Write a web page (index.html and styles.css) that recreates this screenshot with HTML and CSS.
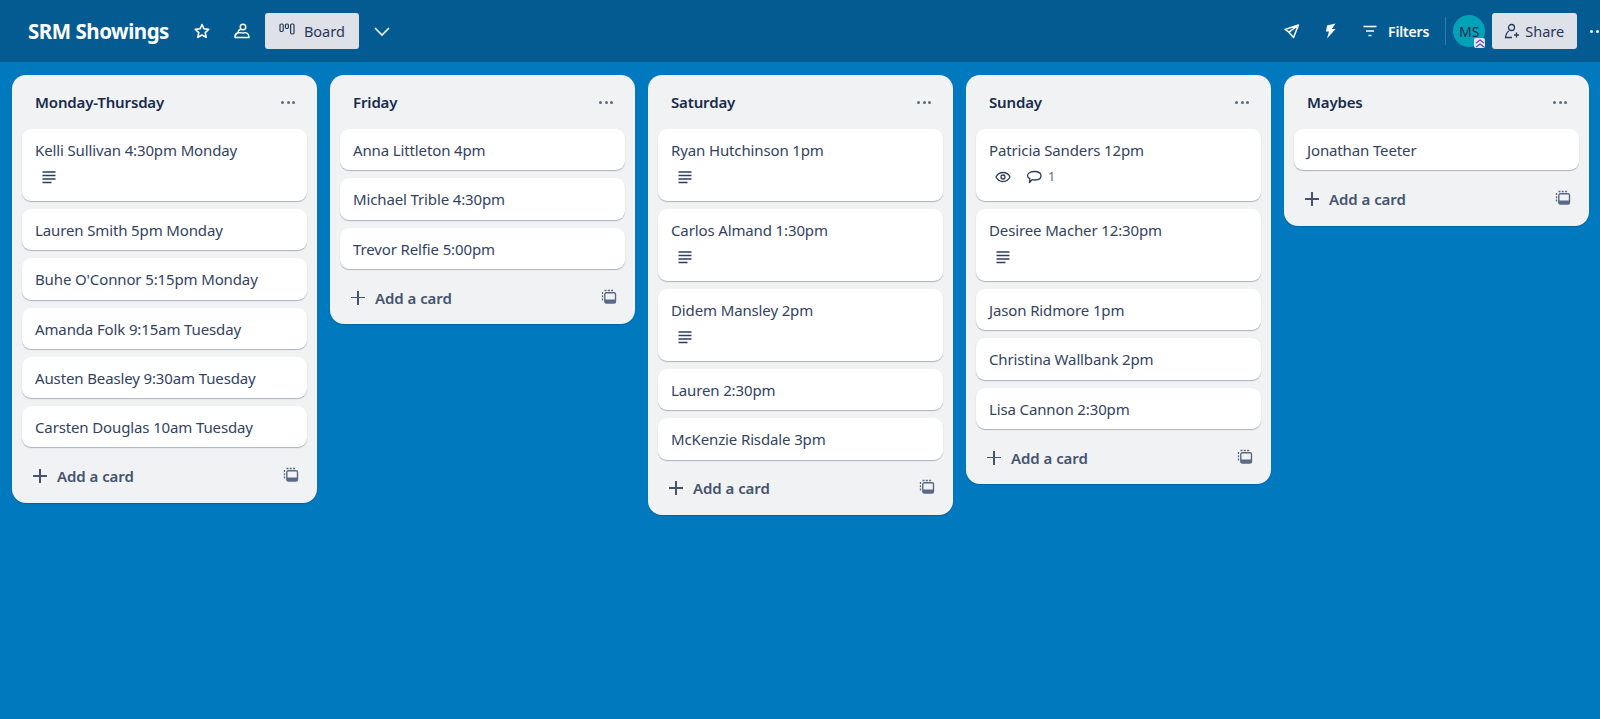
FILE: index.html
```html
<!DOCTYPE html>
<html lang="en">
<head>
<meta charset="utf-8">
<title>SRM Showings</title>
<link rel="stylesheet" href="styles.css">
</head>
<body>
<svg class="sprites" width="0" height="0" aria-hidden="true">
  <symbol id="desc" viewBox="0 0 16 16"><path d="M1.500 3h13M1.500 6.500h13M1.500 10h13M1.500 13.500h9" fill="none" stroke="currentColor" stroke-width="1.300"/></symbol>
  <symbol id="tpl" viewBox="0 0 16 16"><path d="M3.500 1.500h9.500M1.500 3v9" fill="none" stroke="currentColor" stroke-width="1.300" stroke-dasharray="2 1.300"/><rect x="3.800" y="3.800" width="10.700" height="10.200" rx="1.500" fill="none" stroke="currentColor" stroke-width="1.400"/><rect x="3.800" y="10.500" width="10.700" height="3.500" fill="currentColor"/></symbol>
</svg>
<header class="topbar">
  <div class="topbar-left">
    <h1 class="board-title">SRM Showings</h1>
    <button class="icon-btn star" aria-label="Star"><svg width="18" height="18" viewBox="0 0 18 18"><path d="M9 2.500l2 4.300 4.700.6-3.450 3.200.9 4.700L9 13l-4.150 2.300.9-4.700L2.300 7.400l4.700-.6z" fill="none" stroke="currentColor" stroke-width="1.600" stroke-linejoin="round"/></svg></button>
    <button class="icon-btn people" aria-label="Workspace"><svg width="18" height="18" viewBox="0 0 18 18"><g fill="none" stroke="currentColor" stroke-width="1.400" stroke-linejoin="round"><circle cx="10" cy="5" r="2.800"/><path d="M2 15.500c-.3-2.500 1-4.300 3-4.700.1-1.800 1-3 2.500-3.300M2 15.500c.3-2.300 1.500-4.300 3.500-4.700 1.600-.4 3.200-.2 4.500.4 1.400-.8 3-.6 4.300.2 1.200.8 1.700 2.500 1.700 4.100z"/></g></svg></button>
    <button class="view-btn"><svg class="board-ico" width="16" height="14" viewBox="0 0 16 14"><g fill="none" stroke="currentColor" stroke-width="1.200"><rect x="1" y="1" width="3.200" height="7.500" rx="1.200"/><rect x="6.400" y="1" width="3" height="4.500" rx="1.200"/><rect x="11.600" y="1" width="3.400" height="10" rx="1.200"/></g></svg>Board</button>
    <button class="icon-btn chev" aria-label="Views"><svg width="18" height="18" viewBox="0 0 18 18"><path d="M2 6l7 7 7-7" fill="none" stroke="currentColor" stroke-width="1.600"/></svg></button>
  </div>
  <div class="topbar-right">
    <span class="tool"><svg width="17" height="17" viewBox="0 0 17 17"><path d="M15.500 2L2 6.500l4 2.700 1 1.300 3.500 4zM6 9.200L15.500 2" fill="none" stroke="currentColor" stroke-width="1.500" stroke-linejoin="round"/></svg></span>
    <span class="tool bolt"><svg width="16" height="16" viewBox="0 0 16 16"><path d="M12.500 .5L4 2.500 3 8.500h3L4 15.500l8.500-9.500H8.800z" fill="currentColor"/></svg></span>
    <span class="tool filters"><svg width="16" height="14" viewBox="0 0 16 14"><path d="M1.500 2.500h13M4 7h8M6.500 11.500h3" fill="none" stroke="currentColor" stroke-width="1.400"/></svg>Filters</span>
    <span class="divider"></span>
    <span class="avatar">MS<span class="avatar-badge"><svg width="10" height="9" viewBox="0 0 10 9"><path d="M1 4l4-3 4 3M1 8l4-3 4 3" fill="none" stroke="#5e4db2" stroke-width="1.200"/></svg></span></span>
    <button class="view-btn share"><svg width="16" height="16" viewBox="0 0 16 16"><g fill="none" stroke="currentColor" stroke-width="1.300"><circle cx="7.500" cy="4.500" r="3"/><path d="M5 8c-2 1-3 3.500-3.500 6.500H8M12.500 9.500v5M10 12h5"/></g></svg>Share</button>
    <span class="more-dots"><i></i><i></i><i></i></span>
  </div>
</header>
<main class="board">
  <section class="list">
    <div class="list-head"><h2>Monday-Thursday</h2><span class="dots"><i></i><i></i><i></i></span></div>
    <article class="card tall">Kelli Sullivan 4:30pm Monday<div class="badges"><svg class="bi" width="16" height="16"><use href="#desc"/></svg></div></article>
    <article class="card">Lauren Smith 5pm Monday</article>
    <article class="card">Buhe O'Connor 5:15pm Monday</article>
    <article class="card">Amanda Folk 9:15am Tuesday</article>
    <article class="card">Austen Beasley 9:30am Tuesday</article>
    <article class="card">Carsten Douglas 10am Tuesday</article>
    <div class="add"><span class="plus"></span><span class="add-label">Add a card</span><svg class="tpl" width="16" height="16"><use href="#tpl"/></svg></div>
  </section>
  <section class="list">
    <div class="list-head"><h2>Friday</h2><span class="dots"><i></i><i></i><i></i></span></div>
    <article class="card">Anna Littleton 4pm</article>
    <article class="card">Michael Trible 4:30pm</article>
    <article class="card">Trevor Relfie 5:00pm</article>
    <div class="add"><span class="plus"></span><span class="add-label">Add a card</span><svg class="tpl" width="16" height="16"><use href="#tpl"/></svg></div>
  </section>
  <section class="list">
    <div class="list-head"><h2>Saturday</h2><span class="dots"><i></i><i></i><i></i></span></div>
    <article class="card tall">Ryan Hutchinson 1pm<div class="badges"><svg class="bi" width="16" height="16"><use href="#desc"/></svg></div></article>
    <article class="card tall">Carlos Almand 1:30pm<div class="badges"><svg class="bi" width="16" height="16"><use href="#desc"/></svg></div></article>
    <article class="card tall">Didem Mansley 2pm<div class="badges"><svg class="bi" width="16" height="16"><use href="#desc"/></svg></div></article>
    <article class="card">Lauren 2:30pm</article>
    <article class="card">McKenzie Risdale 3pm</article>
    <div class="add"><span class="plus"></span><span class="add-label">Add a card</span><svg class="tpl" width="16" height="16"><use href="#tpl"/></svg></div>
  </section>
  <section class="list">
    <div class="list-head"><h2>Sunday</h2><span class="dots"><i></i><i></i><i></i></span></div>
    <article class="card tall">Patricia Sanders 12pm<div class="badges">
      <svg class="bi" width="16" height="16" viewBox="0 0 16 16"><g fill="none" stroke="currentColor" stroke-width="1.300"><path d="M1 8c1.500-3 4-4.500 7-4.500s5.500 1.500 7 4.500c-1.500 3-4 4.500-7 4.500S2.500 11 1 8z"/><circle cx="8" cy="8" r="2"/></g></svg>
      <svg class="bi bubble" width="16" height="16" viewBox="0 0 16 16"><path d="M8.500 2.500C12 2.500 15 4 15 6.800s-2.500 4.200-6 4.200c-1 0-2 0-3-.3L3.500 13.500l.3-3.800C2.200 9 1.500 8 1.500 6.800c0-2.800 3.500-4.300 7-4.300z" fill="none" stroke="currentColor" stroke-width="1.300" stroke-linejoin="round"/></svg>
      <span class="count">1</span></div></article>
    <article class="card tall">Desiree Macher 12:30pm<div class="badges"><svg class="bi" width="16" height="16"><use href="#desc"/></svg></div></article>
    <article class="card">Jason Ridmore 1pm</article>
    <article class="card">Christina Wallbank 2pm</article>
    <article class="card">Lisa Cannon 2:30pm</article>
    <div class="add"><span class="plus"></span><span class="add-label">Add a card</span><svg class="tpl" width="16" height="16"><use href="#tpl"/></svg></div>
  </section>
  <section class="list">
    <div class="list-head"><h2>Maybes</h2><span class="dots"><i></i><i></i><i></i></span></div>
    <article class="card">Jonathan Teeter</article>
    <div class="add"><span class="plus"></span><span class="add-label">Add a card</span><svg class="tpl" width="16" height="16"><use href="#tpl"/></svg></div>
  </section>
</main>
</body>
</html>
```

FILE: styles.css
```css
* { box-sizing: border-box; }
html, body { height: 100%; }
body {
  margin: 0;
  overflow: hidden;
  background: #0079bf;
  color: #172b4d;
  font-family: "Noto Sans", "Open Sans", sans-serif;
  font-size: 14px;
}
.sprites { display: block; height: 0; }
button { font: inherit; border: 0; background: none; color: inherit; padding: 0; }
svg { display: block; flex: none; }

.topbar {
  height: 62px;
  background: #035b92;
  color: #fff;
  display: flex;
  align-items: center;
  justify-content: space-between;
  white-space: nowrap;
}
.topbar-left, .topbar-right { display: flex; align-items: center; }
.topbar-left { padding-left: 28px; }
.board-title { margin: 0 24px 0 0; font-size: 20.500px; font-weight: 700; letter-spacing: -0.48px; }
.icon-btn { display: flex; color: #fff; }
.people { margin-left: 22px; margin-right: 14px; }
.view-btn {
  height: 36px;
  padding: 0 14px;
  border-radius: 3px;
  background: #dfe1e8;
  color: #253858;
  display: flex;
  align-items: center;
  gap: 9px;
  font-size: 14.500px;
}
.board-ico { margin-top: -3px; }
.chev { margin-left: 14px; }
.topbar-right { width: 317px; flex: none; }
.tool { display: flex; align-items: center; color: #fff; font-weight: 600; letter-spacing: -0.15px; }
.bolt { margin-left: 23px; }
.filters { margin-left: 23px; gap: 10px; }
.divider { width: 1px; height: 28px; background: rgba(255,255,255,.2); margin-left: 16px; flex: none; }
.avatar {
  position: relative;
  flex: none;
  width: 32px;
  height: 32px;
  margin-left: 7px;
  border-radius: 50%;
  background: #00a2b8;
  color: #172b4d;
  font-size: 14px;
  display: flex;
  align-items: center;
  justify-content: center;
}
.avatar-badge {
  position: absolute;
  right: 0;
  bottom: -1px;
  width: 11px;
  height: 10px;
  background: #e4e2f5;
  border-radius: 2px;
  display: flex;
  align-items: center;
  justify-content: center;
}
.share { flex: none; margin-left: 7px; padding: 0 12px; gap: 5px; width: 85px; }
.more-dots { flex: none; margin-left: 13px; display: flex; gap: 3px; }
.more-dots i { width: 3px; height: 3px; border-radius: 50%; background: #fff; }

.board {
  display: flex;
  align-items: flex-start;
  gap: 13px;
  padding: 13px 12px 0;
  background: #0079bf;
}
.list {
  flex: none;
  width: 305px;
  padding: 0 10px;
  background: #f1f2f4;
  border-radius: 14px;
  box-shadow: 0 1px 1px rgba(9,30,66,.25);
}
.list-head {
  height: 54px;
  padding: 0 12px 0 13px;
  display: flex;
  align-items: center;
  justify-content: space-between;
}
.list-head h2 { margin: 0; font-size: 15px; font-weight: 600; letter-spacing: -0.15px; color: #172b4d; }
.dots { display: flex; gap: 2.500px; }
.dots i { width: 3px; height: 3px; border-radius: 50%; background: #5a6a85; }
.card {
  height: 41.300px;
  margin-bottom: 8px;
  padding: 11px 13px 0;
  background: #fff;
  border-radius: 9px;
  box-shadow: 0 1px 1px rgba(9,30,66,.3);
  color: #33435f;
  font-size: 15px;
  line-height: 20px;
  letter-spacing: -0.13px;
}
.card.tall { height: 72px; }
.badges { display: flex; align-items: center; padding: 9px 0 0 6px; color: #2c3e5d; }
.bubble { margin-left: 15px; }
.count { margin-left: 6px; font-size: 12.500px; color: #5a6a85; line-height: 16px; letter-spacing: 0; }
.add {
  height: 47.500px;
  padding: 0 8px 6px 11px;
  display: flex;
  align-items: center;
  color: #44546f;
}
.plus { position: relative; width: 14px; height: 14px; margin-right: 10px; flex: none; }
.plus::before, .plus::after { content: ""; position: absolute; background: #44546f; }
.plus::before { left: 0; right: 0; top: 6px; height: 1.500px; }
.plus::after { top: 0; bottom: 0; left: 6px; width: 1.500px; }
.add-label { flex: 1; font-size: 15px; font-weight: 600; letter-spacing: -0.05px; }
.tpl { color: #5a6a85; margin-top: -2px; }
```
